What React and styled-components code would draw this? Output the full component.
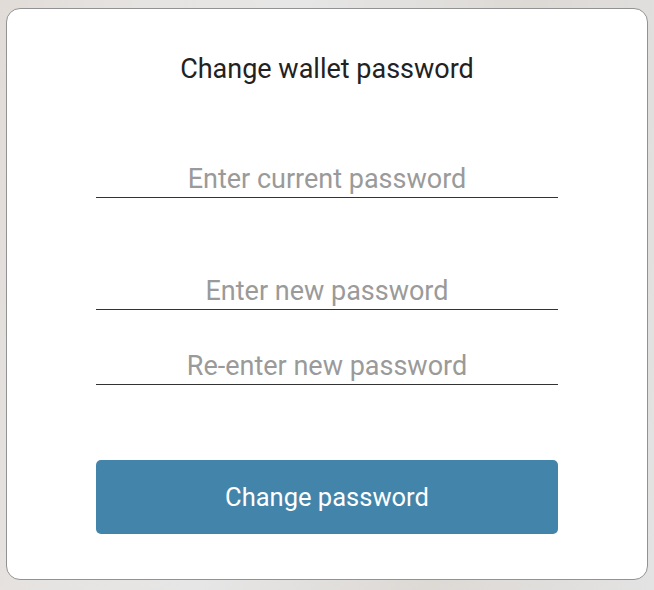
import React from "react";
import styled, { createGlobalStyle } from "styled-components";

const GlobalStyle = createGlobalStyle`
  html, body {
    margin: 0;
    padding: 0;
    height: 100%;
  }
  body {
    font-family: Roboto, "Liberation Sans", sans-serif;
    background: linear-gradient(100deg, #e2dcd8 0%, #e6e4e2 20%, #e6e6e6 40%, #ddd9d5 70%, #e3e3e3 100%);
    overflow: hidden;
  }
`;

const Page = styled.div`
  width: 654px;
  height: 590px;
  padding: 8px 6px 0 6px;
  box-sizing: border-box;
`;

const Card = styled.form`
  width: 642px;
  height: 572px;
  box-sizing: border-box;
  background: #fff;
  border: 1px solid #929292;
  border-radius: 14px;
  padding: 44px 89px 0 89px;
  display: flex;
  flex-direction: column;
  align-items: stretch;
`;

const Title = styled.h2`
  margin: 0;
  font-weight: 400;
  font-size: 27px;
  line-height: 32px;
  color: #222;
  text-align: center;
`;

const Field = styled.input`
  margin-top: ${(p) => p.$gap}px;
  height: 37px;
  box-sizing: border-box;
  border: none;
  border-bottom: 1px solid #333;
  outline: none;
  background: transparent;
  font-family: Roboto, "Liberation Sans", sans-serif;
  font-size: 27px;
  text-align: center;
  padding: 0 0 1px 0;
  color: #333;
  &::placeholder {
    color: #9a9a9a;
  }
`;

const Submit = styled.button`
  margin-top: 75px;
  height: 74px;
  border: none;
  border-radius: 5px;
  background: #4385aa;
  color: #fff;
  font-family: Roboto, "Liberation Sans", sans-serif;
  font-size: 25.5px;
  cursor: pointer;
`;

export default function App() {
  return (
    <>
      <GlobalStyle />
      <Page>
        <Card onSubmit={(e) => e.preventDefault()}>
          <Title>Change wallet password</Title>
          <Field $gap={76} type="password" placeholder="Enter current password" />
          <Field $gap={75} type="password" placeholder="Enter new password" />
          <Field $gap={38} type="password" placeholder="Re-enter new password" />
          <Submit type="submit">Change password</Submit>
        </Card>
      </Page>
    </>
  );
}
